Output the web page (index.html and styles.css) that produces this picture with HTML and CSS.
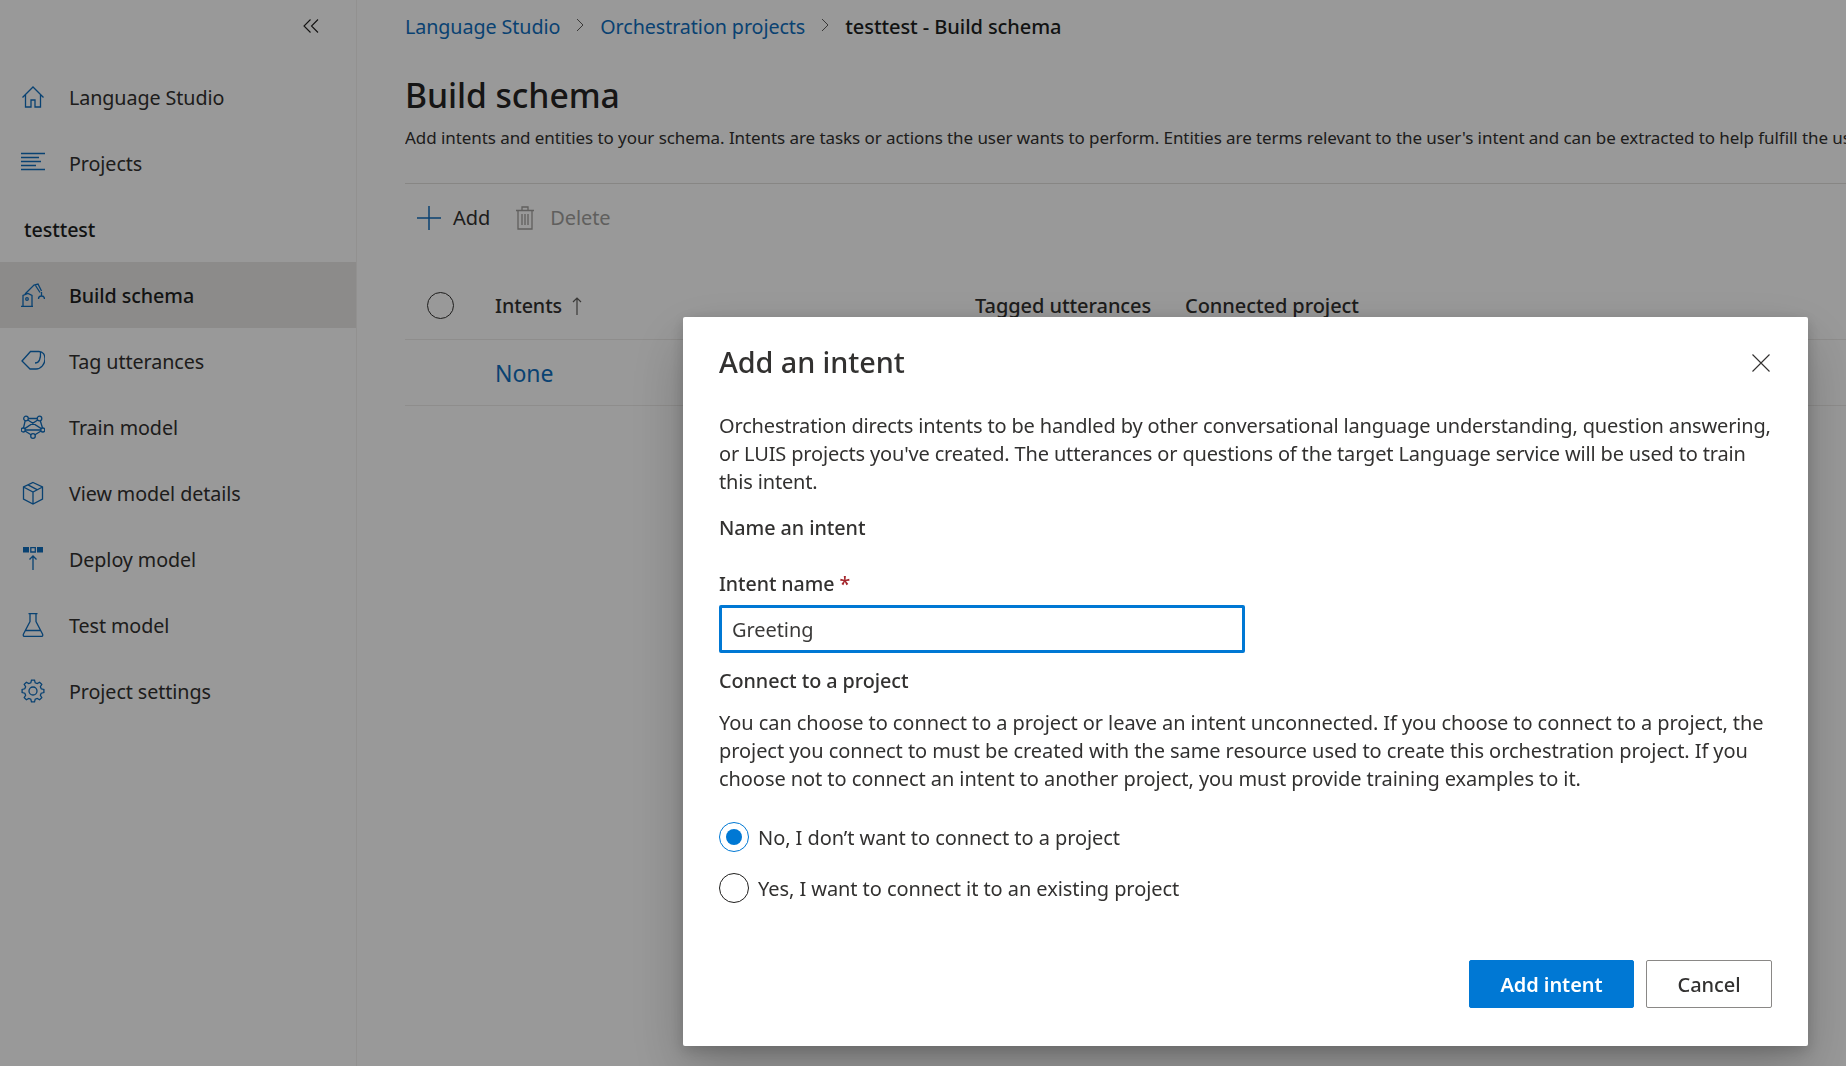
FILE: index.html
```html
<!DOCTYPE html>
<html lang="en">
<head>
<meta charset="utf-8">
<title>Build schema</title>
<link rel="stylesheet" href="styles.css">
</head>
<body>
<div class="app">
  <aside class="sidebar">
    <div class="collapse-row">
      <svg class="collapse-icon" viewBox="0 0 16 14"><path d="M7.5 .5 1 7l6.5 6.5M15 .5 8.5 7l6.5 6.5"/></svg>
    </div>
    <nav class="nav">
      <a class="nav-item"><svg class="nav-icon" viewBox="0 0 24 24"><path d="M1.5 12.5 12 2l10.500 10.500M4.500 10v12h5.500v-7h4v7h5.500V10"/></svg><span>Language Studio</span></a>
      <a class="nav-item"><svg class="nav-icon" viewBox="0 0 24 24"><path d="M0 2.500h24M0 6.500h18M0 10.500h20M0 14.500h15M0 18.500h24"/></svg><span>Projects</span></a>
      <div class="nav-title">testtest</div>
      <a class="nav-item nav-item-active"><svg class="nav-icon" viewBox="0 0 24 24"><path d="M0 23.500h12M2 23.500v-11l5-2 4 2v11M4 11l9-9 4-1 3.500 7M14.500 2.500l4.500 7M17.500 16c0-2 1.500-3 3-3s3 1 3 3M20.500 9v4"/><circle cx="6" cy="16" r="1.300"/></svg><span>Build schema</span></a>
      <a class="nav-item"><svg class="nav-icon" viewBox="0 0 24 24"><path d="M1 12 9.500 2.500h8.500c4 0 6 3.500 6 7.500 0 5-4 10-9 10H9z"/><path d="M14 14c4 0 6-4 5.500-11"/></svg><span>Tag utterances</span></a>
      <a class="nav-item"><svg class="nav-icon" viewBox="0 0 24 24"><circle cx="5" cy="3.500" r="2.300"/><circle cx="18.500" cy="3.500" r="2.300"/><circle cx="2.200" cy="15" r="2"/><circle cx="21.800" cy="15" r="2"/><circle cx="12" cy="21" r="2.300"/><path d="M7.300 3.500h8.900M4.200 5.700 2.500 13M19.300 5.700 21.500 13M4 16l6 3.800M20 16l-6 3.800M6.800 5l13.500 8.600M16.700 5 3.700 13.600M4.200 15h15.600"/></svg><span>Train model</span></a>
      <a class="nav-item"><svg class="nav-icon" viewBox="0 0 24 24"><path d="M12 1.500 21.500 6v12L12 23 2.500 18V6zM2.500 6l9.500 5 9.500-5M12 11v12M7 3.800l9.500 5"/></svg><span>View model details</span></a>
      <a class="nav-item"><svg class="nav-icon" viewBox="0 0 24 24"><path class="icon-fill" d="M2 0h6v5.500H2zM16 0h6v5.500h-6z"/><path d="M9.800.5h4.500v4.500H9.800zM12 23V9M8.500 12.500 12 9l3.500 3.500"/></svg><span>Deploy model</span></a>
      <a class="nav-item"><svg class="nav-icon" viewBox="0 0 24 24"><path d="M7.500 .5h9M9 .5v8L2.500 21c-.7 1.500 0 2.500 1.500 2.500h16c1.500 0 2.200-1 1.500-2.500L15 8.500v-8M4.500 17.500h15"/></svg><span>Test model</span></a>
      <a class="nav-item"><svg class="nav-icon" viewBox="0 0 24 24"><path d="M20.210 9.800 22.890 10.470V13.530L20.210 14.200 19.360 16.250 20.780 18.620 18.620 20.780 16.250 19.360 14.200 20.210 13.530 22.890H10.470L9.800 20.210 7.750 19.360 5.380 20.780 3.220 18.620 4.640 16.250 3.790 14.200 1.110 13.530V10.470L3.790 9.800 4.640 7.750 3.220 5.380 5.380 3.220 7.750 4.640 9.800 3.790 10.470 1.110H13.530L14.200 3.790 16.250 4.640 18.620 3.220 20.780 5.380 19.360 7.750z"/><circle cx="12" cy="12" r="4"/></svg><span>Project settings</span></a>
    </nav>
  </aside>
  <main class="main">
    <div class="breadcrumb">
      <a class="crumb-link">Language Studio</a>
      <svg class="crumb-sep" viewBox="0 0 8 14"><path d="M1 1l6 6-6 6"/></svg>
      <a class="crumb-link">Orchestration projects</a>
      <svg class="crumb-sep" viewBox="0 0 8 14"><path d="M1 1l6 6-6 6"/></svg>
      <span class="crumb-current">testtest - Build schema</span>
    </div>
    <h1 class="page-title">Build schema</h1>
    <p class="page-desc">Add intents and entities to your schema. Intents are tasks or actions the user wants to perform. Entities are terms relevant to the user's intent and can be extracted to help fulfill the user's request.</p>
    <div class="toolbar">
      <button class="tool">
        <svg class="tool-add" viewBox="0 0 24 24"><path d="M12 0v24M0 12h24"/></svg>
        <span>Add</span>
      </button>
      <button class="tool tool-disabled">
        <svg class="tool-trash" viewBox="0 0 20 24"><path d="M1 4.500h18M7 4.500V1h6v3.500M3 4.500V23h14V4.500M7 8v11M10 8v11M13 8v11"/></svg>
        <span>Delete</span>
      </button>
    </div>
    <div class="table-row table-head">
      <span class="cell-check"><span class="check-circle"></span></span>
      <span class="cell-name">Intents <svg class="sort-icon" viewBox="0 0 10 18"><path d="M5 18V1M1 5l4-4 4 4"/></svg></span>
      <span class="cell-tagged">Tagged utterances</span>
      <span class="cell-connected">Connected project</span>
    </div>
    <div class="table-row">
      <span class="cell-check"></span>
      <a class="cell-name none-link">None</a>
    </div>
  </main>
</div>
<div class="overlay">
  <section class="modal">
    <header class="modal-head">
      <h2 class="modal-title">Add an intent</h2>
      <svg class="modal-close" viewBox="0 0 18 18"><path d="M.5.5l17 17M17.500.5l-17 17"/></svg>
    </header>
    <p class="modal-text modal-intro">Orchestration directs intents to be handled by other conversational language understanding, question answering, or LUIS projects you've created. The utterances or questions of the target Language service will be used to train this intent.</p>
    <h3 class="modal-sub sub-name">Name an intent</h3>
    <label class="field-label">Intent name <span class="req">*</span></label>
    <div class="text-field">Greeting</div>
    <h3 class="modal-sub sub-connect">Connect to a project</h3>
    <p class="modal-text">You can choose to connect to a project or leave an intent unconnected. If you choose to connect to a project, the project you connect to must be created with the same resource used to create this orchestration project. If you choose not to connect an intent to another project, you must provide training examples to it.</p>
    <div class="radios">
      <div class="radio-row"><span class="radio radio-on"></span><span>No, I don’t want to connect to a project</span></div>
      <div class="radio-row"><span class="radio"></span><span>Yes, I want to connect it to an existing project</span></div>
    </div>
    <footer class="modal-foot">
      <button class="btn btn-primary">Add intent</button>
      <button class="btn">Cancel</button>
    </footer>
  </section>
</div>
</body>
</html>
```

FILE: styles.css
```css
* { box-sizing: border-box; }
html, body { margin: 0; height: 100%; overflow: hidden; background: #fff; }
body { font-family: "Noto Sans", "Open Sans", sans-serif; color: #323130; font-size: 20px; letter-spacing: -0.07px; }
h1, h2, h3, p { margin: 0; }
button { font-family: inherit; letter-spacing: inherit; }

.app { display: flex; height: 1066px; }

.sidebar { width: 357px; flex: none; border-right: 1px solid #f3f2f1; }
.collapse-row { height: 64px; display: flex; justify-content: flex-end; padding: 19px 37px 0 0; }
.collapse-icon { width: 16px; height: 14px; fill: none; stroke: #201f1e; stroke-width: 1.1; }
.nav { display: flex; flex-direction: column; font-size: 19.7px; }
.nav-item { height: 66px; display: flex; align-items: center; gap: 24px; padding-left: 21px; color: #323130; }
.nav-item-active { background: #e9e8e6; color: #201f1e; font-weight: 500; }
.nav-icon { width: 24px; height: 24px; flex: none; fill: none; stroke: #106ebe; stroke-width: 1.3; font-weight: 400; }
.icon-fill { fill: #106ebe; stroke: none; }
.nav-title { height: 66px; display: flex; align-items: center; padding-left: 24px; font-weight: 500; color: #201f1e; }

.main { flex: 1; min-width: 0; padding-left: 48px; }
.breadcrumb { height: 52px; display: flex; align-items: center; gap: 16px; white-space: nowrap; font-size: 19.7px; }
.crumb-link { color: #106ebe; }
.crumb-current { color: #201f1e; font-weight: 500; font-size: 20px; }
.crumb-sep { width: 8px; height: 14px; fill: none; stroke: #605e5c; stroke-width: 1; margin-top: -2px; }
.page-title { font-size: 33.7px; font-weight: 500; line-height: 44px; margin-top: 21px; color: #252423; }
.page-desc { font-size: 17px; line-height: 24px; margin-top: 9px; white-space: nowrap; overflow: hidden; color: #323130; }
.toolbar { border-top: 1px solid #e1dfdd; margin-top: 33px; height: 91px; padding: 0 0 23px 12px; display: flex; align-items: center; gap: 25px; }
.tool { display: flex; align-items: center; gap: 12px; padding: 0; border: 0; background: none; font-size: 20px; color: #323130; }
.tool-disabled { color: #a19f9d; gap: 15px; }
.tool-add { width: 24px; height: 24px; fill: none; stroke: #106ebe; stroke-width: 1.5; }
.tool-trash { width: 20px; height: 24px; fill: none; stroke: #a19f9d; stroke-width: 1.3; }
.table-row { height: 66px; display: flex; align-items: center; border-bottom: 1px solid #edebe9; }
.table-head { font-size: 19.7px; padding-bottom: 2px; }
.cell-check { width: 90px; flex: none; padding-left: 22px; display: flex; }
.check-circle { width: 27px; height: 27px; border: 1.5px solid #323130; border-radius: 50%; }
.cell-name { width: 480px; flex: none; font-weight: 500; color: #323130; display: flex; align-items: center; gap: 10px; }
.sort-icon { width: 10px; height: 18px; fill: none; stroke: #605e5c; stroke-width: 1.2; }
.cell-tagged { width: 210px; flex: none; font-weight: 500; white-space: nowrap; font-size: 20px; }
.cell-connected { font-weight: 500; white-space: nowrap; font-size: 20px; }
.none-link { color: #106ebe; font-size: 23px; font-weight: 400; }

.overlay { position: fixed; inset: 0; background: rgba(0,0,0,.4); }
.modal { position: absolute; left: 683px; top: 317px; width: 1125px; height: 729px; background: #fff; border-radius: 2px; padding: 0 36px; display: flex; flex-direction: column;
  box-shadow: 0 25.6px 57.6px rgba(0,0,0,.22), 0 4.8px 14.4px rgba(0,0,0,.18); }
.modal-head { height: 92px; display: flex; justify-content: space-between; align-items: center; flex: none; }
.modal-title { font-size: 28.8px; font-weight: 500; color: #323130; margin-bottom: 4px; }
.modal-close { width: 18px; height: 18px; fill: none; stroke: #323130; stroke-width: 1.1; margin-right: 2px; }
.modal-text { line-height: 28px; color: #323130; }
.modal-intro { margin-top: 3px; letter-spacing: -0.16px; }
.modal-sub { font-size: 19.8px; font-weight: 500; line-height: 28px; color: #323130; }
.sub-name { margin-top: 18px; }
.field-label { display: block; margin-top: 28px; line-height: 28px; font-weight: 500; font-size: 19.6px; }
.req { color: #a4262c; }
.text-field { width: 526px; height: 48px; margin-top: 7px; border: 3px solid #0078d4; border-radius: 2px; padding-left: 10px; display: flex; align-items: center; color: #3b3a39; }
.sub-connect { margin-top: 14px; margin-bottom: 14px; }
.radios { display: flex; flex-direction: column; gap: 21px; margin-top: 29px; }
.radio-row { display: flex; align-items: center; gap: 9px; height: 30px; }
.radio { width: 30px; height: 30px; border-radius: 50%; border: 1px solid #201f1e; flex: none; position: relative; }
.radio-on { border-color: #0078d4; }
.radio-on::after { content: ""; position: absolute; left: 6px; top: 6px; width: 16px; height: 16px; border-radius: 50%; background: #0078d4; }
.modal-foot { margin-top: auto; padding-bottom: 38px; display: flex; justify-content: flex-end; gap: 12px; }
.btn { height: 48px; width: 126px; border: 1px solid #8a8886; border-radius: 2px; background: #fff; font-size: 20px; font-weight: 500; color: #323130; }
.btn-primary { width: 165px; background: #0078d4; border-color: #0078d4; color: #fff; font-weight: 600; }
```
